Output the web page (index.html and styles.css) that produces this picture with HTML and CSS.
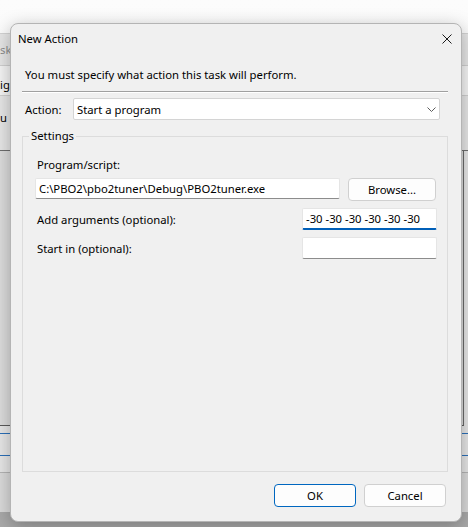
FILE: index.html
```html
<!DOCTYPE html>
<html lang="en">
<head>
  <meta charset="UTF-8" />
  <title>New Action</title>
  <link rel="stylesheet" href="styles.css">
</head>
<body>
  <div class="desktop">
    <div class="bg-window">
      <div class="bg-title">sk</div>
      <div class="bg-tabs">ig</div>
      <div class="bg-text">u c</div>
      <div class="bg-list"></div>
      <div class="bg-row first"></div>
      <div class="bg-row"></div>
      <div class="bg-footer"></div>
      <div class="bg-taskbar"></div>
    </div>

    <div class="dialog">
      <div class="title-bar">
        <span class="title">New Action</span>
        <svg class="close" width="10" height="10" viewBox="0 0 10 10">
          <path d="M0.5 0.5 L9.5 9.5 M9.5 0.5 L0.5 9.5" stroke="#1a1a1a" stroke-width="1" fill="none"/>
        </svg>
      </div>

      <div class="dialog-body">
        <div class="prompt">You must specify what action this task will perform.</div>
        <div class="separator"></div>

        <div class="action-row">
          <label>Action:</label>
          <div class="combo">
            <span>Start a program</span>
            <svg width="9" height="5" viewBox="0 0 9 5">
              <path d="M0.5 0.5 L4.5 4.5 L8.5 0.5" stroke="#5c5c5c" stroke-width="1" fill="none"/>
            </svg>
          </div>
        </div>

        <fieldset class="group">
          <legend>Settings</legend>
          <div class="field-label">Program/script:</div>
          <div class="program-row">
            <div class="textbox program">C:\PBO2\pbo2tuner\Debug\PBO2tuner.exe</div>
            <button class="btn browse">Browse...</button>
          </div>
          <div class="arg-row">
            <span class="arg-label">Add arguments (optional):</span>
            <div class="textbox small focused">-30 -30 -30 -30 -30 -30</div>
          </div>
          <div class="arg-row">
            <span class="arg-label">Start in (optional):</span>
            <div class="textbox small"></div>
          </div>
        </fieldset>

        <div class="buttons">
          <button class="btn primary">OK</button>
          <button class="btn">Cancel</button>
        </div>
      </div>
    </div>
  </div>
</body>
</html>
```

FILE: styles.css
```css
body {
  margin: 0;
  font-family: 'Noto Sans', 'Open Sans', sans-serif;
  font-size: 11.3px;
  color: #000;
}
.desktop {
  position: relative;
  width: 468px;
  height: 527px;
  overflow: hidden;
  background: linear-gradient(#fcfcfc, #f1f1f1);
}

/* window behind the dialog */
.bg-window {
  margin-top: 33px;
  height: 494px;
  background: #e6e6e6;
  border-top: 1px solid #d2d2d2;
  display: flex;
  flex-direction: column;
  white-space: nowrap;
}
.bg-title {
  height: 31px;
  line-height: 31px;
  color: #8c8c8c;
}
.bg-tabs {
  height: 29px;
  line-height: 38px;
  background: #f4f4f4;
  border-top: 1px solid #cfcfcf;
  border-bottom: 1px solid #cfcfcf;
}
.bg-text {
  height: 54px;
  line-height: 44px;
  border-bottom: 1px solid #6e6e6e;
}
.bg-list {
  height: 274px;
  margin-right: 4px;
  background: #dcdcdc;
  border-right: 1px solid #6a6a6a;
  border-bottom: 1px solid #5a5a5a;
}
.bg-row {
  height: 16px;
  border-top: 1px solid #2a6fb8;
}
.bg-row.first {
  height: 21px;
  margin-top: 7px;
}
.bg-footer {
  height: 39px;
  border-top: 1px solid #b4b4b4;
  background: #dadada;
}
.bg-taskbar {
  flex: 1;
  background: #a9a9a9;
}

/* dialog */
.dialog {
  position: absolute;
  left: 10px;
  top: 23px;
  width: 452px;
  height: 499px;
  box-sizing: border-box;
  border: 1px solid #b4b4b4;
  border-radius: 8px;
  background: #f0f0f0;
  box-shadow: 0 4px 18px rgba(0, 0, 0, 0.28);
  display: flex;
  flex-direction: column;
}
.title-bar {
  height: 29px;
  display: flex;
  align-items: center;
  justify-content: space-between;
  padding: 0 9px 0 7px;
}
.close {
  display: block;
}
.dialog-body {
  flex: 1;
  display: flex;
  flex-direction: column;
  padding: 0 13px 0 11px;
}
.prompt {
  margin: 14px 0 0 3px;
  line-height: 16px;
}
.separator {
  margin-top: 8px;
  border-top: 1px solid #a0a0a0;
  border-bottom: 1px solid #ffffff;
}
.action-row {
  margin-top: 5px;
  padding-left: 3px;
  display: flex;
  align-items: center;
}
.action-row label {
  width: 48px;
}
.combo {
  width: 367px;
  height: 22px;
  box-sizing: border-box;
  border: 1px solid #d4d4d4;
  border-radius: 2px;
  background: #fff;
  display: flex;
  align-items: center;
  justify-content: space-between;
  padding: 0 3px;
}
.combo svg {
  display: block;
}
.group {
  margin: 8px 0 0;
  padding: 0 10px 0 6px;
  border: 1px solid #dcdcdc;
  min-width: 0;
  height: 344px;
  box-sizing: border-box;
}
.group legend {
  padding: 0 2px;
  line-height: 16px;
}
.field-label {
  margin: 13px 0 0 8px;
  line-height: 16px;
}
.program-row {
  margin: 5px 0 0 6px;
  display: flex;
  align-items: flex-start;
  gap: 8px;
}
.textbox {
  box-sizing: border-box;
  height: 21px;
  line-height: 20px;
  padding: 0 3px;
  background: #fff;
  border: 1px solid #e5e5e5;
  border-bottom-color: #8c8c8c;
  border-radius: 2px;
  white-space: nowrap;
  overflow: hidden;
}
.textbox.program {
  width: 305px;
}
.arg-row {
  margin-top: 7px;
  display: flex;
  align-items: center;
  justify-content: space-between;
  padding-left: 8px;
}
.textbox.small {
  width: 135px;
  height: 22px;
}
.textbox.focused {
  border-bottom: 2px solid #005fb8;
  line-height: 19px;
}
.btn {
  font-family: inherit;
  font-size: 11.3px;
  color: #000;
  background: #fdfdfd;
  border: 1px solid #d0d0d0;
  border-radius: 4px;
  width: 82px;
  height: 23px;
  padding: 0;
}
.btn.browse {
  width: 88px;
}
.btn.primary {
  border-color: #0067c0;
}
.buttons {
  margin-top: 12px;
  padding-right: 2px;
  display: flex;
  justify-content: flex-end;
  gap: 8px;
}
```
